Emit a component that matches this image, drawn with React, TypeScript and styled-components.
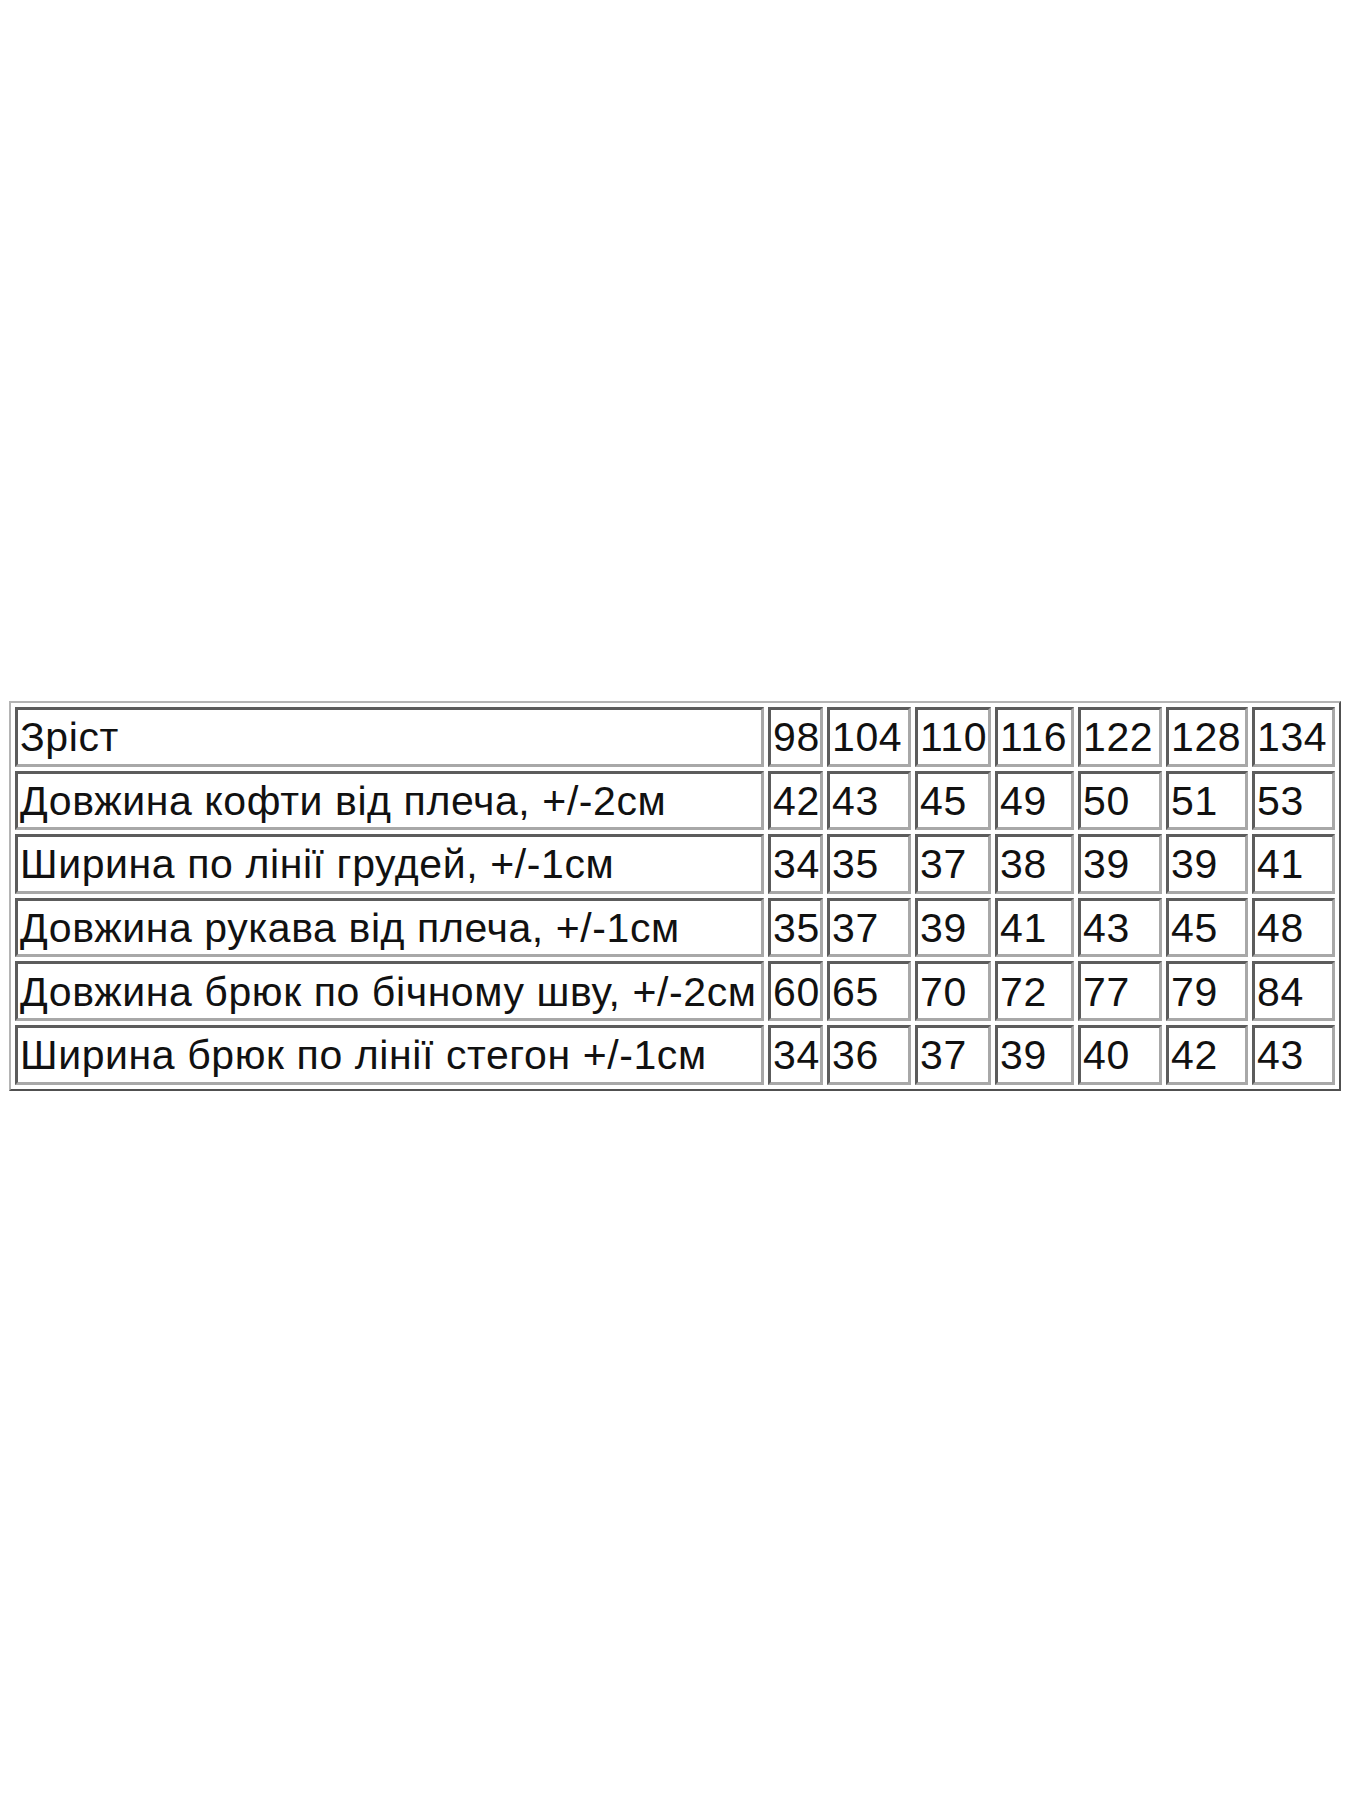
import styled, { createGlobalStyle } from 'styled-components';

const GlobalStyle = createGlobalStyle`
  html, body {
    margin: 0;
    padding: 0;
    background: #ffffff;
  }
  body {
    font-family: "Liberation Sans", Arial, sans-serif;
    color: #000;
  }
`;

const Page = styled.div`
  width: 1350px;
  height: 1800px;
  box-sizing: border-box;
  padding: 701px 0 0 9px;
`;

const Table = styled.table`
  border-collapse: separate;
  border-spacing: 4px;
  border: 2px solid;
  border-color: #b4b4b4 #505050 #505050 #b4b4b4;
  table-layout: fixed;
  width: 1330px;
`;

const Cell = styled.td`
  box-sizing: border-box;
  height: 59.6px;
  padding: 1px 2px 0;
  border: 3px solid;
  border-color: #5c5c5c #a8a8a8 #a8a8a8 #5c5c5c;
  font-size: 41px;
  line-height: 46px;
  vertical-align: middle;
  white-space: nowrap;
  overflow: hidden;
  letter-spacing: 0.6px;
  color: #111;
`;

const colWidths = [749, 55, 84, 76, 79, 84, 82, 83];

const rows: string[][] = [
  ['Зріст', '98', '104', '110', '116', '122', '128', '134'],
  ['Довжина кофти від плеча, +/-2см', '42', '43', '45', '49', '50', '51', '53'],
  ['Ширина по лінії грудей, +/-1см', '34', '35', '37', '38', '39', '39', '41'],
  ['Довжина рукава від плеча, +/-1см', '35', '37', '39', '41', '43', '45', '48'],
  ['Довжина брюк по бічному шву, +/-2см', '60', '65', '70', '72', '77', '79', '84'],
  ['Ширина брюк по лінії стегон +/-1см', '34', '36', '37', '39', '40', '42', '43'],
];

const App = () => {
  return (
    <Page>
      <GlobalStyle />
      <Table>
        <colgroup>
          {colWidths.map((w, key) => (
            <col key={key} style={{ width: w }} />
          ))}
        </colgroup>
        <tbody>
          {rows.map((row, r) => (
            <tr key={r}>
              {row.map((value, c) => (
                <Cell key={c}>{value}</Cell>
              ))}
            </tr>
          ))}
        </tbody>
      </Table>
    </Page>
  );
};

export default App;
